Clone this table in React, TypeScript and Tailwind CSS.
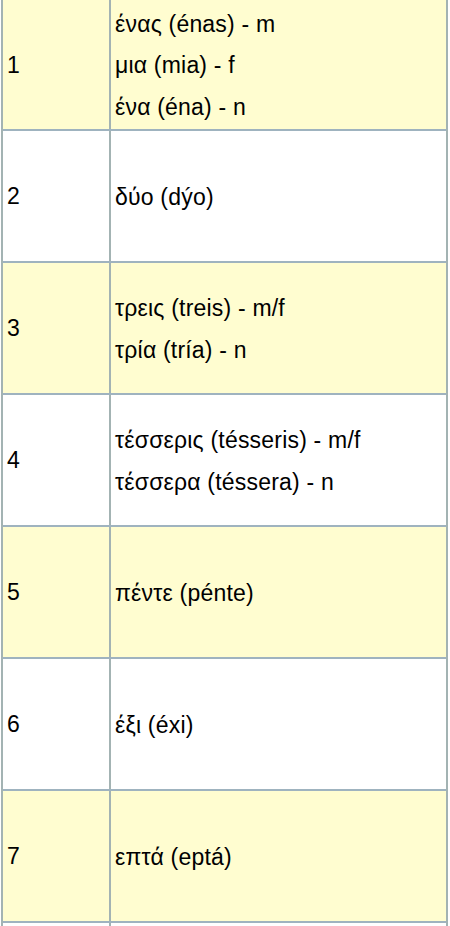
import React from "react";

const rows: { n: string; lines: string[]; yellow: boolean; h: string }[] = [
  { n: "1", lines: ["ένας (énas) - m", "μια (mia) - f", "ένα (éna) - n"], yellow: true, h: "h-[131px]" },
  { n: "2", lines: ["δύο (dýo)"], yellow: false, h: "h-[132px]" },
  { n: "3", lines: ["τρεις (treis) - m/f", "τρία (tría) - n"], yellow: true, h: "h-[132px]" },
  { n: "4", lines: ["τέσσερις (tésseris) - m/f", "τέσσερα (téssera) - n"], yellow: false, h: "h-[132px]" },
  { n: "5", lines: ["πέντε (pénte)"], yellow: true, h: "h-[132px]" },
  { n: "6", lines: ["έξι (éxi)"], yellow: false, h: "h-[132px]" },
  { n: "7", lines: ["επτά (eptá)"], yellow: true, h: "h-[132px]" },
];

export default function App() {
  return (
    <div className="w-[450px] h-[926px] overflow-hidden bg-white" style={{ fontFamily: '"Liberation Sans", Arial, sans-serif' }}>
      <div className="ml-[1px] w-[447px] border-x-2 border-[#a3b3b3]">
        {rows.map((r) => (
          <div
            key={r.n}
            className={`grid grid-cols-[108px_1fr] border-b-2 border-[#9fb3bf] ${r.h} ${r.yellow ? "bg-[#fffdd0]" : "bg-white"}`}
          >
            <div className="flex items-center border-r-2 border-[#a3b3b3] pl-1 pt-[1px] text-[23px] text-black">
              {r.n}
            </div>
            <div className="flex flex-col justify-center pl-1 pt-[3px] text-[23px] tracking-[0.2px] leading-[41.5px] text-black">
              {r.lines.map((l) => (
                <div key={l} className="whitespace-nowrap">{l}</div>
              ))}
            </div>
          </div>
        ))}
        <div className="grid h-[40px] grid-cols-[108px_1fr] bg-white">
          <div className="border-r-2 border-[#a3b3b3]" />
          <div />
        </div>
      </div>
    </div>
  );
}
